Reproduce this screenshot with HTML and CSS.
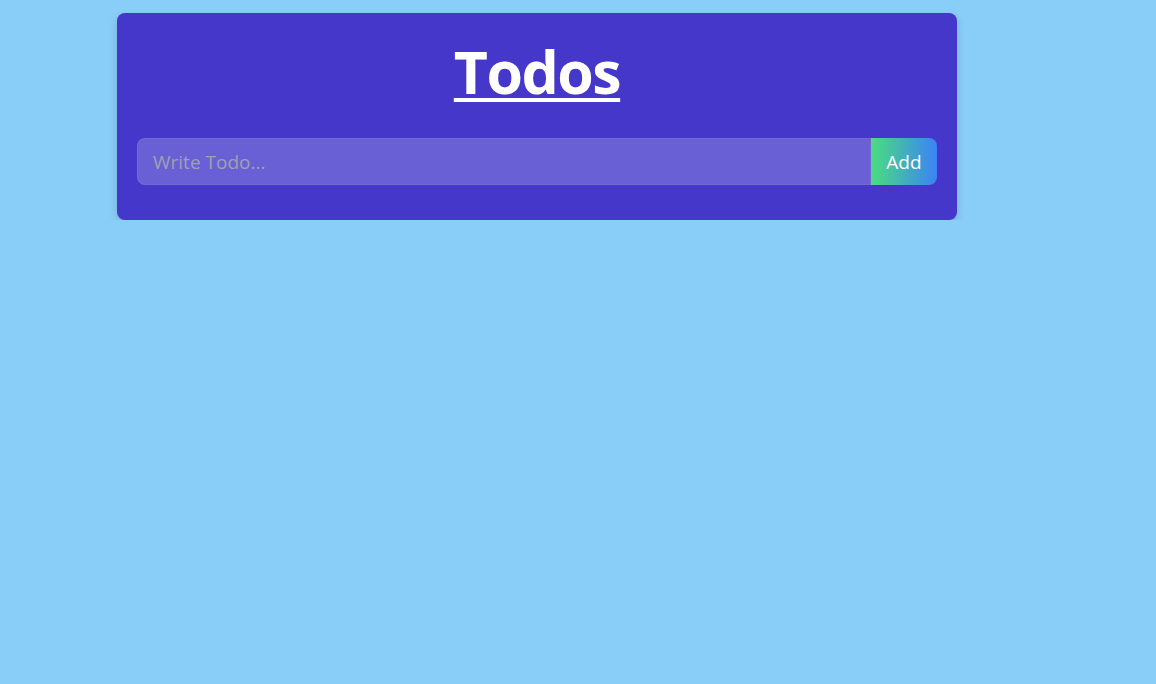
FILE: index.html
```html
<!DOCTYPE html>
<html>
<head>
<meta charset="utf-8">
<link rel="stylesheet" href="styles.css">
</head>
<body>
<div class="card">
  <h1 class="title">Todos</h1>
  <form class="todo-form">
    <input class="todo-input" type="text" placeholder="Write Todo...">
    <button class="add-btn" type="button">Add</button>
  </form>
</div>
</body>
</html>
```
FILE: styles.css
```css
html, body {
  margin: 0;
  padding: 0;
  background: #89cdf9;
  min-height: 100%;
}
body {
  font-family: "Open Sans", "Noto Sans", sans-serif;
  padding-top: 13px;
}
.card {
  width: 840px;
  margin-left: 117px;
  box-sizing: border-box;
  background: #4437ca;
  border-radius: 8px;
  padding: 28px 20px 35px;
  box-shadow: 0 4px 8px rgba(0, 0, 0, 0.15);
}
.title {
  margin: 0 0 37px;
  text-align: center;
  color: #fff;
  font-size: 59px;
  line-height: 60px;
  font-weight: 700;
  text-decoration: underline;
  text-decoration-thickness: 4px;
  text-underline-offset: 4px;
  letter-spacing: -1.5px;
}
.todo-form {
  display: flex;
  height: 47px;
}
.todo-input {
  flex: 1;
  min-width: 0;
  box-sizing: border-box;
  height: 47px;
  border: 1px solid rgba(255, 255, 255, 0.06);
  border-radius: 8px 0 0 8px;
  background: #6a60d5;
  padding: 0 15px;
  font-family: inherit;
  font-size: 19px;
  color: #fff;
  outline: none;
}
.todo-input::placeholder {
  color: #9ca3af;
}
.add-btn {
  width: 66px;
  height: 47px;
  border: none;
  border-radius: 0 8px 8px 0;
  background: linear-gradient(to right, #4ade80, #3b82f6);
  color: #fff;
  font-family: inherit;
  font-size: 19px;
  padding: 0;
}
```
